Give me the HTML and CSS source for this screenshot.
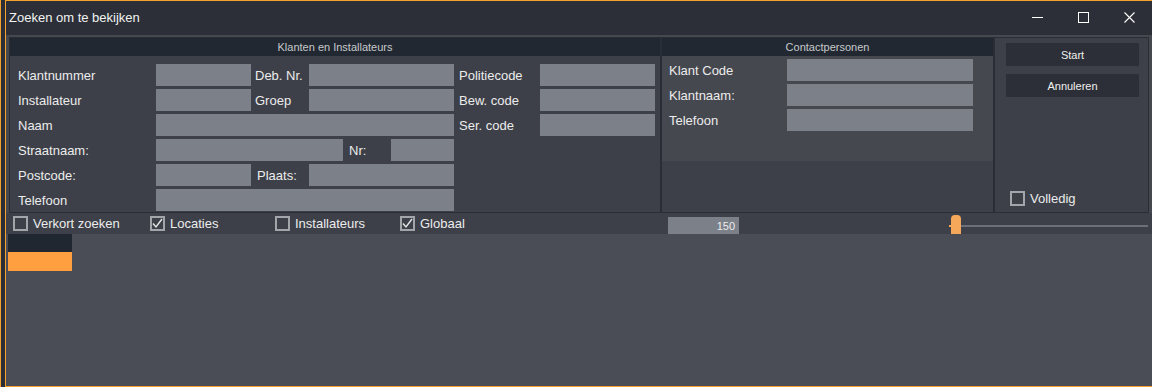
FILE: index.html
```html
<!DOCTYPE html>
<html lang="nl">
<head>
<meta charset="utf-8">
<title>Zoeken om te bekijken</title>
<link rel="stylesheet" href="styles.css">
</head>
<body>
<div class="screen">
  <div class="edge"></div>
  <div class="window">
    <header class="titlebar">
      <span class="title">Zoeken om te bekijken</span>
      <div class="controls">
        <span class="ctl"><svg width="11" height="11" viewBox="0 0 11 11"><line x1="0" y1="5.5" x2="11" y2="5.5" stroke="#fff" stroke-width="1"/></svg></span>
        <span class="ctl"><svg width="11" height="11" viewBox="0 0 11 11"><rect x="0.5" y="0.5" width="10" height="10" fill="none" stroke="#fff" stroke-width="1"/></svg></span>
        <span class="ctl"><svg width="11" height="11" viewBox="0 0 11 11"><path d="M0.5 0.5 L10.5 10.5 M10.5 0.5 L0.5 10.5" stroke="#fff" stroke-width="1.1"/></svg></span>
      </div>
    </header>
    <main class="content">
      <div class="top">
        <section class="group klanten">
          <div class="ghead">Klanten en Installateurs</div>
          <div class="kgrid">
            <label class="lbl">Klantnummer</label><div class="inp"></div>
            <label class="lbl l2">Deb. Nr.</label><div class="inp"></div>
            <label class="lbl l3">Politiecode</label><div class="inp"></div>

            <label class="lbl">Installateur</label><div class="inp"></div>
            <label class="lbl l2">Groep</label><div class="inp"></div>
            <label class="lbl l3">Bew. code</label><div class="inp"></div>

            <label class="lbl">Naam</label><div class="inp span3"></div>
            <label class="lbl l3">Ser. code</label><div class="inp"></div>

            <label class="lbl">Straatnaam:</label>
            <div class="span3 street">
              <div class="inp w-street"></div>
              <label class="lbl nr">Nr:</label>
              <div class="inp grow"></div>
            </div>
            <div class="blank2"></div>

            <label class="lbl">Postcode:</label><div class="inp"></div>
            <label class="lbl l2b">Plaats:</label><div class="inp"></div>
            <div class="blank2"></div>

            <label class="lbl">Telefoon</label><div class="inp span3"></div>
            <div class="blank2"></div>
          </div>
        </section>
        <section class="group contact">
          <div class="ghead">Contactpersonen</div>
          <div class="cbody">
            <div class="cgrid">
              <label class="lbl">Klant Code</label><div class="inp"></div>
              <label class="lbl">Klantnaam:</label><div class="inp"></div>
              <label class="lbl">Telefoon</label><div class="inp"></div>
            </div>
          </div>
          <div class="cfoot"></div>
        </section>
        <aside class="actions">
          <button class="btn">Start</button>
          <button class="btn">Annuleren</button>
          <div class="opt volledig"><span class="cb"></span><span>Volledig</span></div>
        </aside>
      </div>
      <div class="optbar">
        <div class="opt o1"><span class="cb"></span><span>Verkort zoeken</span></div>
        <div class="opt o2"><span class="cb checked"><svg width="11" height="11" viewBox="0 0 11 11"><path d="M1 5.5 L4 9 L10 1" fill="none" stroke="#e6e6e6" stroke-width="1.4"/></svg></span><span>Locaties</span></div>
        <div class="opt o2"><span class="cb"></span><span>Installateurs</span></div>
        <div class="opt o2"><span class="cb checked"><svg width="11" height="11" viewBox="0 0 11 11"><path d="M1 5.5 L4 9 L10 1" fill="none" stroke="#e6e6e6" stroke-width="1.4"/></svg></span><span>Globaal</span></div>
        <div class="num">150</div>
        <div class="slider"><span class="tick"></span><span class="thumb"></span></div>
      </div>
      <div class="results">
        <div class="tab"><div class="tab-dark"></div><div class="tab-orange"></div></div>
      </div>
    </main>
  </div>
</div>
</body>
</html>
```

FILE: styles.css
```css
* { box-sizing: border-box; }
html, body { margin: 0; padding: 0; }
body {
  width: 1152px; height: 387px; overflow: hidden;
  background: #2b2e36;
  font-family: "Liberation Sans", Arial, sans-serif;
  font-size: 13px;
  color: #ececec;
}
.screen { display: flex; height: 387px; }
.edge { width: 5px; border-left: 1px solid #f5a12c; background: #2b2e36; }
.window {
  flex: 1;
  display: flex; flex-direction: column;
  border-left: 1px solid #f5a12c;
  border-top: 1px solid #f5a12c;
  border-bottom: 1px solid #f5a12c;
  background: #45484f;
}
.titlebar {
  height: 34px; flex: none;
  background: #2c2f37;
  display: flex; align-items: center; justify-content: space-between;
  padding-left: 3px;
}
.title { font-size: 13px; color: #f2f2f2; padding-bottom: 1px; }
.controls { display: flex; height: 100%; }
.ctl { width: 46px; display: flex; align-items: center; justify-content: center; padding-bottom: 1px; }
.content { flex: 1; display: flex; flex-direction: column; padding-top: 2px; }
.top {
  margin: 0 3px 0 3px;
  height: 176px;
  display: grid;
  grid-template-columns: 650px 331px 1fr;
  column-gap: 2px;
  padding: 1px;
  background: #2a2d35;
}
.group { display: flex; flex-direction: column; background: #3d4048; }
.ghead {
  height: 18px; flex: none;
  background: #222831;
  color: #c6c8cc;
  font-size: 11px;
  display: flex; align-items: center; justify-content: center;
}
.kgrid {
  display: grid;
  grid-template-columns: 138px 95px 58px 145px 86px 115px;
  grid-auto-rows: 22px;
  row-gap: 3px;
  padding: 8px 0 0 8px;
}
.lbl { display: flex; align-items: center; color: #ececec; white-space: nowrap; }
.l2 { padding-left: 4px; }
.l2b { padding-left: 6px; }
.l3 { padding-left: 5px; }
.inp { background: #7b8089; height: 22px; }
.span3 { grid-column: span 3; }
.blank2 { grid-column: span 2; }
.street { display: flex; }
.w-street { width: 187px; }
.nr { width: 48px; padding-left: 6px; }
.grow { flex: 1; }

.contact { background: #3d4048; }
.cbody { height: 105px; background: #45484f; padding: 3px 0 0 7px; }
.cgrid {
  display: grid;
  grid-template-columns: 118px 186px;
  grid-auto-rows: 22px;
  row-gap: 3px;
}
.cfoot { flex: 1; }

.actions {
  background: #3d4048;
  display: flex; flex-direction: column; align-items: flex-start;
  padding: 5px 0 6px 11px;
}
.btn {
  width: 133px; height: 23px;
  border: 0; padding: 0; margin: 0 0 8px 0;
  background: #2c2f37;
  color: #f0f0f0;
  font-family: "Liberation Sans", Arial, sans-serif;
  font-size: 11px;
}
.volledig { margin-top: auto; padding-left: 4px; }

.opt { display: flex; align-items: center; gap: 5px; color: #ececec; }
.cb {
  width: 15px; height: 15px; flex: none;
  border: 2px solid #a2a5aa;
  display: flex; align-items: center; justify-content: center;
}
.optbar {
  height: 21px; flex: none;
  background: #3d4048;
  display: flex; align-items: center;
  padding-left: 7px;
}
.o1 { width: 137px; }
.o2 { width: 125px; }
.num {
  margin-left: 143px;
  width: 71px; height: 17px;
  background: #7b8089;
  font-size: 11px;
  text-align: right;
  padding: 3px 4px 0 0;
  align-self: flex-end;
}
.slider {
  margin-left: 210px;
  flex: 1;
  height: 21px;
  position: relative;
  margin-right: 4px;
}
.slider::before {
  content: ""; position: absolute; left: 2px; right: 0; top: 12px; height: 2px;
  background: #6b6f77;
}
.tick { position: absolute; left: 0; top: 12px; width: 3px; height: 2px; background: #f6a85a; }
.thumb {
  position: absolute; left: 2px; top: 2px; width: 10px; height: 19px;
  background: #f6a85a;
  border-radius: 4px 4px 0 0;
}
.results { flex: 1; background: #4a4d55; padding-left: 2px; }
.tab { width: 64px; }
.tab-dark { height: 18px; background: #202731; }
.tab-orange { height: 19px; background: #ff9f40; }
```
